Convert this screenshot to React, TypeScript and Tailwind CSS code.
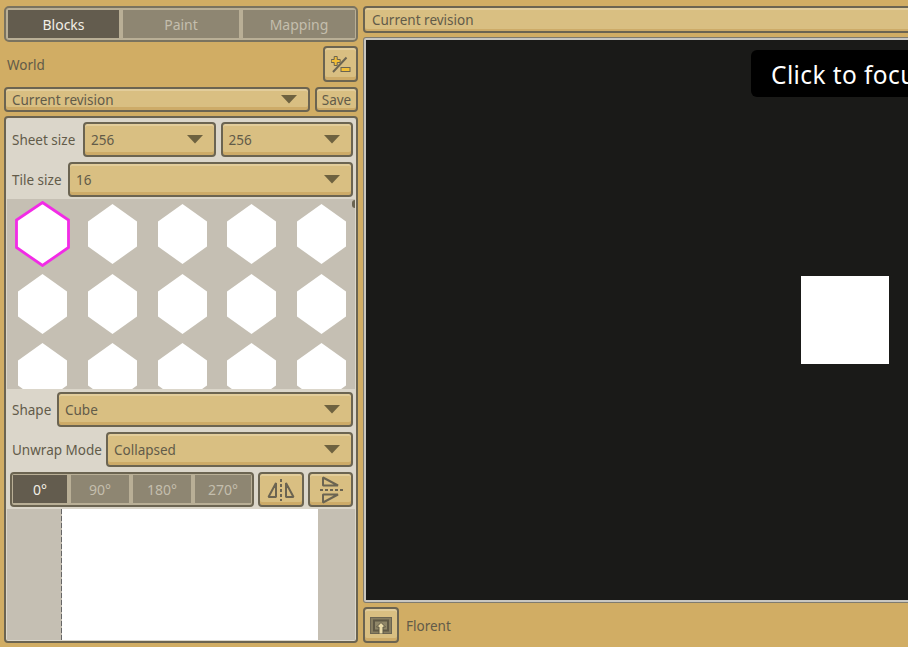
import type { ReactNode } from "react";

const columns = [0, 1, 2, 3, 4];
const rows = [0, 1, 2];

function Caret() {
  return (
    <svg width="16" height="9" viewBox="0 0 16 9">
      <polygon points="0,0 16,0 8,8.5" fill="#6e6240" />
    </svg>
  );
}

function Select({ label, className = "" }: { label: string; className?: string }) {
  return (
    <div
      className={`flex h-[35px] items-center justify-between rounded-[4px] border-2 border-[#6b6451] bg-[#d9bf82] pl-[6px] pr-[11px] shadow-[inset_0_2px_0_#e2cd9b,inset_0_-3px_0_#cdab68] ${className}`}
    >
      <span className="pt-[1px]">{label}</span>
      <Caret />
    </div>
  );
}

function IconButton({ children, className = "" }: { children: ReactNode; className?: string }) {
  return (
    <div
      className={`flex shrink-0 items-center justify-center rounded-[4px] border-2 border-[#6b6451] bg-[#d9bf82] shadow-[inset_0_2px_0_#e2cd9b,inset_0_-3px_0_#cdab68] ${className}`}
    >
      {children}
    </div>
  );
}

function Segment({ label, active, className = "" }: { label: string; active?: boolean; className?: string }) {
  return (
    <div
      className={`flex items-center justify-center ${
        active ? "bg-[#635c4e] text-[#f2efe6]" : "bg-[#8e8672] text-[#c4bead]"
      } ${className}`}
    >
      {label}
    </div>
  );
}

function Hex({ selected }: { selected?: boolean }) {
  if (selected) {
    return (
      <svg width="55" height="66" viewBox="0 0 55 66" className="absolute left-[8px] top-[2px]">
        <polygon points="27.5,1.5 53.5,19 53.5,46.5 27.5,64.5 1.5,46.5 1.5,19" fill="#fff" stroke="#f22be6" strokeWidth="2.8" />
      </svg>
    );
  }
  return (
    <svg width="49" height="60" viewBox="0 0 49 60" className="absolute left-[11px] top-[5px]">
      <polygon points="24.5,0 49,17.5 49,42.5 24.5,60 0,42.5 0,17.5" fill="#fff" />
    </svg>
  );
}

export default function App() {
  return (
    <div className="flex h-[647px] w-[908px] gap-[5px] overflow-hidden bg-[#d1ad64] pl-[4px] pt-[6px] font-['Noto_Sans',sans-serif] text-[13.5px] text-[#625b49]">
      {/* Left column */}
      <div className="flex w-[354px] shrink-0 flex-col">
        <div className="flex h-[36px] gap-[4px] rounded-[5px] border-2 border-[#7a735f] bg-[#b9af96] py-[2px] pl-[2px] pr-[1px] text-[14px]">
          <Segment label="Blocks" active className="w-[111px]" />
          <Segment label="Paint" className="w-[116px]" />
          <Segment label="Mapping" className="flex-1" />
        </div>

        <div className="mt-[4px] flex h-[36px] items-center justify-between pl-[3px]">
          <span className="pt-[2px]">World</span>
          <IconButton className="h-[36px] w-[35px]">
            <svg width="20" height="17" viewBox="0 0 20 17">
              <path d="M15.5 1.5 2 16" stroke="#6b6451" strokeWidth="2" fill="none" />
              <path d="M3.2.5h3v3h3v3h-3v3h-3v-3h-3v-3h3z" fill="#f3bf36" stroke="#6b6451" strokeWidth="1" />
              <rect x="10" y="11.5" width="9" height="4" fill="#f3bf36" stroke="#6b6451" strokeWidth="1" />
            </svg>
          </IconButton>
        </div>

        <div className="mt-[5px] flex gap-[5px]">
          <Select label="Current revision" className="!h-[25px] flex-1" />
          <div className="flex h-[25px] w-[43px] items-center justify-center rounded-[4px] border-2 border-[#6b6451] bg-[#d9bf82] pt-[1px] shadow-[inset_0_2px_0_#e2cd9b,inset_0_-2px_0_#cdab68]">
            Save
          </div>
        </div>

        <div className="mt-[4px] flex h-[527px] flex-col rounded-[4px] border-2 border-[#6b6451] bg-[#dbd6ca] px-[1px] pb-[1px] pt-[2px]">
          <div className="mt-[2px] flex items-center pl-[5px] pr-[2px]">
            <span className="w-[71px] shrink-0 pt-[1px]">Sheet size</span>
            <div className="flex flex-1 gap-[5px]">
              <Select label="256" className="flex-1" />
              <Select label="256" className="flex-1" />
            </div>
          </div>
          <div className="mt-[5px] flex items-center pl-[5px] pr-[2px]">
            <span className="w-[56px] shrink-0 pt-[1px]">Tile size</span>
            <Select label="16" className="flex-1" />
          </div>

          <div className="relative mt-[2px] h-[190px] shrink-0 overflow-hidden bg-[#c5bfb3]">
            <div className="absolute right-0 top-[1px] h-[8px] w-[3px] rounded-l-full bg-[#6b6451]" />
            {rows.map((row) => (
              <div key={row} className="grid h-[69.5px] grid-cols-[repeat(5,69.75px)]">
                {columns.map((col) => (
                  <div key={col} className="relative">
                    <Hex selected={row === 0 && col === 0} />
                  </div>
                ))}
              </div>
            ))}
          </div>

          <div className="mt-[3px] flex items-center pl-[5px] pr-[2px]">
            <span className="w-[45px] shrink-0 pt-[1px]">Shape</span>
            <Select label="Cube" className="flex-1" />
          </div>
          <div className="mt-[5px] flex items-center pl-[5px] pr-[2px]">
            <span className="w-[94px] shrink-0 pt-[1px]">Unwrap Mode</span>
            <Select label="Collapsed" className="flex-1" />
          </div>

          <div className="mt-[5px] flex items-center gap-[4px] pl-[3px] pr-[2px]">
            <div className="flex h-[35px] w-[244px] gap-[4px] rounded-[4px] border-2 border-[#6b6451] bg-[#b9af96] px-[1px] pb-[2px] pt-[1px] text-[14px]">
              <Segment label="0°" active className="w-[54px]" />
              <Segment label="90°" className="w-[58px]" />
              <Segment label="180°" className="w-[58px]" />
              <Segment label="270°" className="flex-1" />
            </div>
            <IconButton className="h-[35px] w-[46px]">
              <svg width="28" height="24" viewBox="0 0 28 24" fill="none" stroke="#6b6451" strokeWidth="2" strokeLinejoin="bevel">
                <path d="M9 5v14H1.5z M19 5v14h7.5z" />
                <path d="M14 1v22" strokeDasharray="3 2" />
              </svg>
            </IconButton>
            <IconButton className="h-[35px] flex-1">
              <svg width="24" height="28" viewBox="0 0 24 28" fill="none" stroke="#6b6451" strokeWidth="2" strokeLinejoin="bevel">
                <path d="M4 1.5v8h15z M4 26.5v-8h15z" />
                <path d="M1 14h23" strokeDasharray="3 2" />
              </svg>
            </IconButton>
          </div>

          <div className="mt-[2px] flex flex-1 bg-[#c5bfb3] pl-[54px]">
            <div className="w-[1px] bg-[repeating-linear-gradient(to_bottom,#666_0,#666_5px,transparent_5px,transparent_7px)]" />
            <div className="w-[256px] bg-white" />
          </div>
        </div>
      </div>

      {/* Right column */}
      <div className="flex w-[700px] shrink-0 flex-col">
        <div className="flex h-[27px] items-center rounded-[4px] border-2 border-[#6b6451] bg-[#d9bf82] pl-[7px] pt-[1px] shadow-[inset_0_2px_0_#e2cd9b,inset_0_-2px_0_#cdab68]">
          Current revision
        </div>

        <div className="relative ml-[1px] mt-[5px] h-[564px] rounded-[2px] border-2 border-[#c8c6c0] bg-[#1a1a18] shadow-[0_0_0_1px_#7f7b6e]">
          <div className="absolute left-[385px] top-[10px] flex h-[47px] w-[300px] items-center rounded-[6px] bg-black pl-[20px] pt-[3px] text-[24.5px] tracking-[0.4px] text-white">
            Click to focus
          </div>
          <div className="absolute left-[435px] top-[236px] h-[88px] w-[88px] bg-white" />
        </div>

        <div className="mt-[5px] flex items-center gap-[7px]">
          <IconButton className="h-[36px] w-[36px]">
            <svg width="22" height="17" viewBox="0 0 22 17">
              <rect x="0.5" y="0.5" width="21" height="16" fill="#877d60" stroke="#6b6451" />
              <rect x="4" y="3.5" width="14" height="10" fill="#8f8668" stroke="#5f5845" strokeWidth="2" />
              <path d="M11 5.5 15.5 10H13v7H9v-7H6.5z" fill="#eadba9" stroke="#5f5845" />
            </svg>
          </IconButton>
          <span className="pt-[3px]">Florent</span>
        </div>
      </div>
    </div>
  );
}
